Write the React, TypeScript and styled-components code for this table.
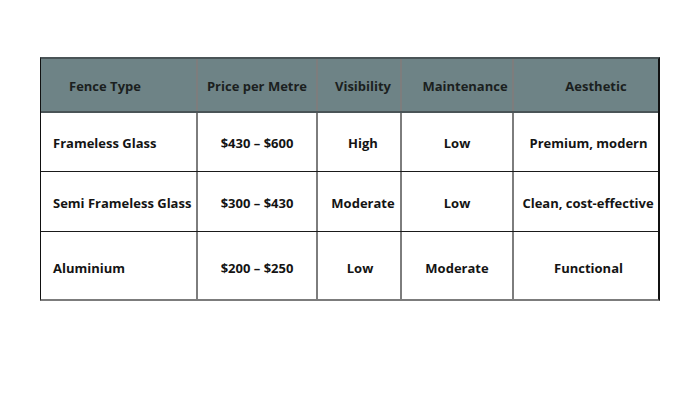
import styled, { createGlobalStyle } from "styled-components";

const Global = createGlobalStyle`
  html, body {
    margin: 0;
    padding: 0;
    background: white;
  }
  body {
    width: 700px;
    height: 400px;
    overflow: hidden;
    font-family: "Open Sans", "Liberation Sans", sans-serif;
  }
`;

type Cell = { text: string; align?: "left" | "center"; shift?: number };

const header: Cell[] = [
  { text: "Fence Type", align: "left", shift: 16 },
  { text: "Price per Metre" },
  { text: "Visibility", shift: 8 },
  { text: "Maintenance", shift: 16 },
  { text: "Aesthetic", shift: 20 },
];

const rows: Cell[][] = [
  [
    { text: "Frameless Glass", align: "left" },
    { text: "$430 – $600" },
    { text: "High", shift: 8 },
    { text: "Low" },
    { text: "Premium, modern", shift: 5 },
  ],
  [
    { text: "Semi Frameless Glass", align: "left" },
    { text: "$300 – $430" },
    { text: "Moderate", shift: 8 },
    { text: "Low" },
    { text: "Clean, cost-effective", shift: 4 },
  ],
  [
    { text: "Aluminium", align: "left" },
    { text: "$200 – $250" },
    { text: "Low", shift: 2 },
    { text: "Moderate" },
    { text: "Functional", shift: 5 },
  ],
];

const rowHeights = [59, 60, 67];

function App() {
  return (
    <Page>
      <Global />
      <Table>
        <HeadRow>
          {header.map((c, i) => (
            <HeadCell key={i} $align={c.align} $shift={c.shift} $last={i === header.length - 1}>
              {c.text}
            </HeadCell>
          ))}
        </HeadRow>
        {rows.map((r, ri) => (
          <BodyRow key={ri} $h={rowHeights[ri]} $last={ri === rows.length - 1}>
            {r.map((c, i) => (
              <Cell
                key={i}
                $align={c.align}
                $shift={c.shift}
                $last={i === r.length - 1}
                $top={ri === rows.length - 1 ? 7 : 4}
              >
                {c.text}
              </Cell>
            ))}
          </BodyRow>
        ))}
      </Table>
    </Page>
  );
}
export default App;

const Page = styled.div`
  padding: 57px 0 0 40px;
`;

const Table = styled.div`
  width: 620px;
  box-sizing: border-box;
  border-left: 1px solid #111;
  border-right: 2px solid #111;
  border-top: 2px solid #4a5457;
  border-bottom: 2px solid #7c7c7c;
  display: flex;
  flex-direction: column;
`;

const cols = "157px 120px 84px 112px 144px";

const HeadRow = styled.div`
  display: grid;
  grid-template-columns: ${cols};
  height: 54px;
  background: #6e8386;
  border-bottom: 2px solid #4a5457;
  box-sizing: border-box;
`;

const BodyRow = styled.div<{ $h: number; $last: boolean }>`
  display: grid;
  grid-template-columns: ${cols};
  height: ${(p) => p.$h}px;
  box-sizing: border-box;
  border-bottom: ${(p) => (p.$last ? "none" : "1px solid #1a1a1a")};
`;

const Cell = styled.div<{ $align?: "left" | "center"; $shift?: number; $last: boolean; $top?: number }>`
  display: flex;
  align-items: center;
  justify-content: ${(p) => (p.$align === "left" ? "flex-start" : "center")};
  box-sizing: border-box;
  padding-left: ${(p) => (p.$align === "left" ? 12 + (p.$shift ?? 0) : p.$shift ?? 0)}px;
  padding-top: ${(p) => p.$top ?? 4}px;
  border-right: ${(p) => (p.$last ? "none" : "2px solid #7d7d7d")};
  font: 700 13px/1.2 "Open Sans", "Liberation Sans", sans-serif;
  color: #141414;
  white-space: nowrap;
`;

const HeadCell = styled(Cell)`
  color: #1b1f20;
`;
